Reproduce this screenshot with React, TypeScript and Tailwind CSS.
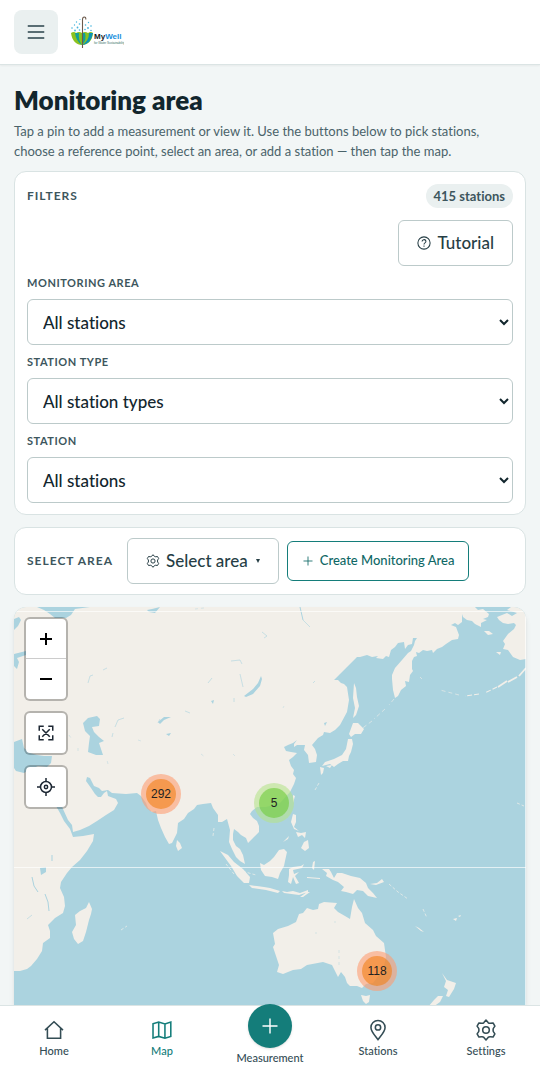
import React, { useState } from 'react';

interface IconProps {
    className?: string;
}

interface Option {
    value: string;
    label: string;
}

interface Cluster {
    count: number;
    size: 'small' | 'large';
    position: string;
}

const clusters: Cluster[] = [
    { count: 292, size: 'large', position: 'left-[127px] top-[167px]' },
    { count: 5, size: 'small', position: 'left-[240px] top-[176px]' },
    { count: 118, size: 'large', position: 'left-[343px] top-[344px]' },
];

const strokeProps = {
    viewBox: '0 0 24 24',
    fill: 'none',
    stroke: 'currentColor',
    strokeWidth: 1.7,
    'aria-hidden': true,
} as const;

function HomeIcon({ className }: IconProps) {
    return (
        <svg {...strokeProps} className={className}>
            <path d="M2.2 12.2 12 3l9.800 9.200M4.800 10v11h14.400V10" />
        </svg>
    );
}

function MapIcon({ className }: IconProps) {
    return (
        <svg {...strokeProps} className={className}>
            <path d="M2.200 5.200 8.400 3.400 15.200 5.400 21.600 3.400V19L15.200 21 8.400 19 2.200 20.800ZM8.400 3.400V19M15.200 5.400V21" />
        </svg>
    );
}

function PinIcon({ className }: IconProps) {
    return (
        <svg {...strokeProps} className={className}>
            <path d="M12 22.500C9 18.300 4.300 14 4.300 9.300a7.700 7.700 0 0 1 15.400 0c0 4.700-4.700 9-7.700 13.200Z" />
            <circle cx="12" cy="9.200" r="2.900" />
        </svg>
    );
}

function GearIcon({ className }: IconProps) {
    return (
        <svg {...strokeProps} className={className} strokeLinejoin="round">
            <path d="M12 1.200 14.300 3.900Q15.300 4.900 16.700 4.700L19.700 4.300 21.700 7.800 20 10.200Q19.400 12 20 13.800L21.700 16.200 19.700 19.700 16.700 19.300Q15.300 19.100 14.300 20.100L12 22.800 9.700 20.100Q8.700 19.100 7.300 19.300L4.300 19.700 2.300 16.200 4 13.800Q4.600 12 4 10.200L2.300 7.800 4.300 4.300 7.300 4.700Q8.700 4.900 9.700 3.900Z" />
            <circle cx="12" cy="12" r="3.600" />
        </svg>
    );
}

function PlusIcon({ className }: IconProps) {
    return (
        <svg {...strokeProps} className={className}>
            <path d="M12 3v18M3 12h18" />
        </svg>
    );
}

function MenuIcon({ className }: IconProps) {
    return (
        <svg {...strokeProps} strokeWidth={1.8} className={className}>
            <path d="M3 5.500h18M3 12h18M3 18.500h18" />
        </svg>
    );
}

function HelpIcon({ className }: IconProps) {
    return (
        <svg {...strokeProps} strokeWidth={1.8} className={className}>
            <circle cx="12" cy="12" r="10.500" />
            <path d="M8.700 9.300a3.300 3 0 1 1 5 2.500c-1.100.7-1.700 1.200-1.700 2.600M12 16.300v2" />
        </svg>
    );
}

function ExtentIcon({ className }: IconProps) {
    return (
        <svg {...strokeProps} strokeWidth={2} className={className}>
            <path d="M3 9V3h6M15 3h6v6M21 15v6h-6M9 21H3v-6M7 7l10 10M17 7L7 17" />
        </svg>
    );
}

function LocateIcon({ className }: IconProps) {
    return (
        <svg {...strokeProps} strokeWidth={2} className={className}>
            <circle cx="12" cy="12" r="7.300" />
            <circle cx="12" cy="12" r="2.200" />
            <path d="M12 0v5M12 19v5M0 12h5M19 12h5" />
        </svg>
    );
}

/** Umbrella catching rain, with the wordmark */
function Logo() {
    return (
        <svg viewBox="0 0 54 34" className="h-[34px] w-[54px]" role="img" aria-label="MyWell">
            <path d="M1 18q3-2 5 0 3-2 6 0 3-2 6 0 3-2 5 0C22.500 26 17.500 30 12 30S2 26 1 18Z" fill="#8cc21f" />
            <path d="M5 18q1 8 7 12 -4-5-3-12ZM12 18v12q5-5 3-12Z" fill="#12a099" />
            <path d="M19 18q0 8-7 12 9-1 11-12Z" fill="#0b95b5" />
            <path d="M12.500 33V4.500Q12.600 2 14.300 2t1.500 2.500" fill="none" stroke="#6c5a4c" strokeWidth="1.100" />
            <g fill="#45b4dc">
                <circle cx="2" cy="13" r=".8" />
                <circle cx="5" cy="15.500" r=".9" />
                <circle cx="4.500" cy="10" r=".7" />
                <circle cx="7.500" cy="12.500" r=".9" />
                <circle cx="9.500" cy="15" r=".8" />
                <circle cx="6.500" cy="7" r=".7" />
                <circle cx="9.500" cy="9" r=".8" />
                <circle cx="15.500" cy="10" r=".8" />
                <circle cx="15" cy="14.500" r=".8" />
                <circle cx="18" cy="13" r=".9" />
                <circle cx="18.500" cy="7.500" r=".7" />
                <circle cx="21" cy="11" r=".8" />
                <circle cx="21" cy="15.500" r=".8" />
                <circle cx="10" cy="4.500" r=".6" />
            </g>
            <text x="24" y="24" className="font-['Liberation_Sans',sans-serif] text-[8px] font-bold" fill="#14181c">
                My<tspan fill="#1a8fdc">Well</tspan>
            </text>
            <text x="24" y="29" className="font-['Liberation_Sans',sans-serif] text-[3px]" fill="#35705f">
                for Water Sustainability
            </text>
        </svg>
    );
}

function BaseMap() {
    return (
        <svg
            viewBox="14 607 512 398"
            preserveAspectRatio="xMinYMin slice"
            className="absolute inset-0 h-full w-full"
            aria-hidden="true"
        >
            <rect x="14" y="607" width="512" height="398" fill="#abd3df" />
            <g fill="#f2efe9" strokeLinejoin="round">
                {/* Eurasia and Africa */}
                <path d="M14 607H475L478 610 483 609 489 614 488 617 483 619 487 620 481 623 481 627 475 624 472 621 467 620 463 617 462 614 462 622 458 625 455 623 451 625 456 627 459 635 458 639 452 640 446 644 442 647 437 649 433 653 432 650 427 651 423 650 419 653 416 652 417 656 414 657 412 661 412 669 413 671 410 675 409 682 405 681 406 686 401 690 398 696 395 698 393 690 392 679 392 675 395 668 402 660 408 653 411 651 414 645 415 641 417 638 413 638 412 644 408 645 405 649 404 642 398 643 395 647 391 650 389 657 386 656 383 659 376 658 378 656 372 657 367 655 360 657H357L347 667 340 674 334 680 338 680 341 683 344 684 347 687 349 700 347 712 340 725 335 730 330 733 324 732 323 735 318 738 312 745 315 749 317 755 316 762 309 763 308 755 304 750 305 745 297 745 294 747 294 744 297 740 293 743 288 745 284 747 286 751 291 752 297 753 293 757 289 760 291 766 294 770 293 774 296 778 294 784 290 792 280 803 266 807 257 807 252 811 250 814 253 818 257 821 259 826 259 832 254 837 248 843 246 838 241 835 238 832 234 829 233 834 233 840 236 846 240 849 243 855 245 864 240 861 236 857 232 849 229 842 230 830 227 819 222 822 218 822 218 815 213 808 211 803 203 804 197 805 194 809 188 813 184 819 178 823 177 833 172 843 169 844 165 837 161 828 158 820 156 811 152 812 148 808 146 803 141 796 137 793 126 794 112 793 108 790 102 791 99 788 94 786 90 778 87 777 86 781 91 788 95 794 98 797 101 797 104 793 107 791 108 796 116 799 118 803 114 810 106 815 97 821 89 826 80 830 73 832 72 825 68 820 63 809 60 801 56 795 52 795 56 806 60 813 64 821 70 829 73 837 83 836 94 834 93 841 87 851 80 860 72 867 67 873 61 882 60 888 64 897 65 906 63 913 55 918 48 925 50 931 50 938 43 943 42 951 37 959 31 966 27 969 20 971 14 971Z" />
                {/* Japan, Sakhalin, Taiwan */}
                <path d="M354 683 356 688 357 697 359 706 356 715 353 718 355 708 353 698ZM353 723 358 723 364 729 361 734 355 734 351 737 349 734ZM348 739 352 739 353 744 351 752 349 756 348 761 343 761 338 764 334 767 330 764 322 766 325 762 334 759 338 757 342 755 346 749ZM320 767 324 768 323 773 321 775ZM326 766 332 765 330 768ZM293 795 295 796 293 803Z" />
                {/* South-east Asia */}
                <path d="M177 840 180 843 182 848 178 851 176 846ZM220 851 228 855 234 862 243 869 250 877 249 883 244 883 237 876 231 866ZM249 885 257 886 264 887 270 888 280 891 278 893 266 890 252 888ZM282 891 287 892 293 891 300 893 308 890 308 892 299 895 284 893ZM300 897 307 892 310 892 303 897ZM260 863 264 865 270 861 274 857 279 850 284 849 287 852 285 861 284 866 280 873 278 879 272 877 265 876 261 870ZM289 869 293 867 301 866 304 864 302 868 293 870 294 874 299 872 295 876 299 883 296 884 293 877 291 884 288 882 289 875ZM293 814 296 815 296 822 294 827 299 831 294 829 291 822ZM304 842 308 840 309 848 305 851 301 848ZM283 842 289 836 288 839ZM296 832 301 833 306 832 305 838 302 835 298 837ZM313 862 315 861 314 870 312 868ZM307 877 320 878 320 879 307 878Z" />
                {/* New Guinea and Australia */}
                <path d="M322 869 329 869 331 872 334 878 337 873 342 873 351 876 360 878 366 883 368 888 373 893 377 898 368 896 363 891 357 890 353 894 346 892 341 891 344 887 338 882 333 880 326 876 327 873ZM370 884 377 883 382 879 384 882 376 885ZM273 933 278 929 288 926 296 922 299 914 303 913 307 908 313 910 318 909 319 904 324 902 337 903 334 908 338 912 345 916 350 919 352 907 354 899 358 908 362 913 365 923 373 930 376 936 384 943 386 957 384 966 379 975 373 983 366 984 362 988 357 986 350 986 347 983 345 977 341 972 338 977 336 973 332 965 323 962 307 965 301 969 293 970 283 974 277 972 279 965 276 956 273 947 275 944ZM361 995 366 996 370 995 369 1002 366 1004 363 1001ZM442 973 447 980 456 983 454 989 449 997 446 996 448 990 444 987 446 981ZM443 996 440 1002 433 1007 428 1007 434 1000 438 996ZM415 926 419 928 424 932 421 931ZM453 919 457 918 456 921ZM458 916 461 915 460 917Z" />
                {/* Madagascar */}
                <path d="M89 902 92 909 91 914 89 920 86 932 83 941 78 944 74 939 72 932 76 925 75 915 80 911 86 908Z" />
                {/* Alaska */}
                <path d="M526 607H511L507 610 517 613 512 616 507 613 502 615 497 617 499 620 503 623 508 624 514 623 516 625 514 629 508 634 503 641 505 644 503 649 508 650 513 657 520 660 526 659ZM484 631 489 631 493 634 488 635ZM496 652 501 652 500 655Z" />
            </g>
            <g fill="none" stroke="#f2efe9">
                <path d="M526 668 519 676M517 677 508 682M507 681 498 687" strokeWidth="1.800" />
                <path d="M497 687 485 693M479 694 465 696" strokeWidth="1.100" strokeDasharray="5 2" />
                <path
                    d="M459 695 440 690M422 679 420 677M394 699 389 705M385 709 374 719M372 721 360 730"
                    strokeDasharray="4 3"
                    strokeOpacity=".6"
                />
                <path
                    d="M389 884 398 892 408 899M423 909 427 918M226 864 234 874M238 870 256 875M121 930 127 926M214 828 213 836M315 790 319 783M517 803 524 806"
                    strokeDasharray="3 2"
                    strokeOpacity=".7"
                />
            </g>
            {/* inland seas and lakes */}
            <g fill="#abd3df">
                <path d="M37 607 44 610 50 614 55 618 66 618 71 615 75 609 90 607 96 606 84 607ZM14 619 19 617 21 620 18 626 14 630ZM14 654 26 651 29 654 17 658 19 662 17 669 14 666ZM147 610 152 609 160 607 155 613 149 612Z" />
                <path d="M83 723 88 718 97 716 100 719 99 726 92 727 94 732 99 737 104 741 99 743 103 755 96 755 88 752 89 743 90 736 85 731ZM14 742 22 739 24 748 30 753 37 755 44 756 52 756 51 763 47 767 38 766 29 770 24 773 16 771 14 768Z" />
                <path d="M27 730Q37 721 48 727T65 734Q57 744 42 740T27 730Z" />
                <path d="M261 676 262 679 260 686 253 694 246 697 244 696 253 689 258 683ZM40 868 46 867 46 872 41 875ZM158 722 164 717 171 717 164 720 160 724ZM166 734 171 733 169 736ZM475 607H506L498 610 485 609ZM324 723 327 722 325 726ZM211 701 214 700 213 704Z" />
            </g>
            <g fill="none" stroke="#abd3df">
                <path d="M32 877 34 886 38 892M45 894 48 902 49 911M52 855V861M300 607 303 620" />
                <path
                    d="M303 620 310 627M88 683 90 676 93 675M103 670 107 668M115 727 118 720 124 718M112 737 113 733M27 919 32 915M262 632 267 636 264 638M231 661 240 660 242 664M240 674 243 687M208 683 212 678M234 698V702M185 711 190 713M313 683 315 681M158 723 160 719"
                    strokeOpacity=".6"
                />
                <path
                    d="M138 740 141 741M69 735 71 738M78 748V753M108 764 107 760M339 950V965M315 933H317M334 922H336M201 754 205 757M233 754 235 756M283 708 284 706M195 609 204 608"
                    strokeWidth=".8"
                    strokeOpacity=".5"
                    strokeDasharray="3 3"
                />
            </g>
            {/* tile seams */}
            <path d="M14 611.500H526M14 867.500H526M525.500 607V1005" stroke="#fff" strokeOpacity=".65" fill="none" />
        </svg>
    );
}

function FilterSelect({ id, label, options }: { id: string; label: string; options: Option[] }) {
    const [value, setValue] = useState(options[0].value);
    return (
        <div className="flex flex-col gap-[7px]">
            <label htmlFor={id} className="text-[11px] leading-[18px] font-bold tracking-wider text-[#3d565d] uppercase">
                {label}
            </label>
            <select
                id={id}
                value={value}
                onChange={(e) => setValue(e.target.value)}
                className="h-[46px] w-full rounded-md border border-[#bccaca] bg-white pl-[11px] text-[17px] font-medium text-[#12262d]"
            >
                {options.map((o) => (
                    <option key={o.value} value={o.value}>
                        {o.label}
                    </option>
                ))}
            </select>
        </div>
    );
}

function ClusterMarker({ count, size, position }: Cluster) {
    return (
        <button
            className={`absolute size-10 rounded-full p-[5px] ${position} ${size === 'large' ? 'bg-[#fd9c73]/60' : 'bg-[#b5e28c]/60'}`}
        >
            <span
                className={`flex size-[30px] items-center justify-center rounded-full font-['Liberation_Sans',sans-serif] text-xs text-[#222] ${size === 'large' ? 'bg-[#f18017]/60' : 'bg-[#6ecc39]/60'}`}
            >
                {count}
            </span>
        </button>
    );
}

function MapControls() {
    const box = 'w-11 overflow-hidden rounded-md border-2 border-black/25 bg-white bg-clip-padding text-[#1d2733]';
    return (
        <div className="absolute top-2.5 left-2.5 flex flex-col gap-2.5">
            <div className={box}>
                <button aria-label="Zoom in" className="flex h-10 w-full items-center justify-center border-b border-[#ccc] text-black">
                    <svg viewBox="0 0 12 12" className="size-3" stroke="currentColor" strokeWidth="2">
                        <path d="M6 0v12M0 6h12" />
                    </svg>
                </button>
                <button aria-label="Zoom out" className="flex h-10 w-full items-center justify-center text-black">
                    <svg viewBox="0 0 12 12" className="size-3" stroke="currentColor" strokeWidth="2">
                        <path d="M0 6h12" />
                    </svg>
                </button>
            </div>
            <div className={box}>
                <button aria-label="Fit all stations" className="flex h-10 w-full items-center justify-center">
                    <ExtentIcon className="size-[18px]" />
                </button>
            </div>
            <div className={box}>
                <button aria-label="Show my location" className="flex h-10 w-full items-center justify-center">
                    <LocateIcon className="size-[18px]" />
                </button>
            </div>
        </div>
    );
}

function NavLink({ label, active, children }: { label: string; active?: boolean; children: React.ReactNode }) {
    return (
        <a
            href="#"
            aria-current={active ? 'page' : undefined}
            className={`flex flex-col items-center gap-0.5 pt-[13px] text-[11px] leading-4 font-medium ${active ? 'text-[#147d7a]' : 'text-[#344d55]'}`}
        >
            {children}
            {label}
        </a>
    );
}

function App() {
    return (
        <div className="flex min-h-screen flex-col bg-[#f2f6f6] font-[Lato,'Noto_Sans',sans-serif] text-[#12262d] [font-variant-ligatures:none]">
            <header className="flex h-[65px] items-center gap-3 border-b border-[#dbe4e4] bg-white px-3.5 shadow-xs">
                <button aria-label="Open menu" className="flex size-11 items-center justify-center rounded-lg bg-[#eaf0f0] text-[#2a4249]">
                    <MenuIcon className="size-[22px]" />
                </button>
                <a href="#">
                    <Logo />
                </a>
            </header>

            <main className="flex flex-1 flex-col px-3.5 pt-[19px]">
                <h1 className="text-[26px] leading-8 font-extrabold">Monitoring area</h1>
                <p className="mt-[5px] pr-6 text-[13px] leading-5 text-[#4a636a]">
                    Tap a pin to add a measurement or view it. Use the buttons below to pick stations, choose a reference point,
                    select an area, or add a station — then tap the map.
                </p>

                {/* Filters */}
                <section className="mt-2.5 flex flex-col gap-2 rounded-xl border border-[#d9e3e3] bg-white p-3 pb-[11px]">
                    <div className="flex items-center justify-between">
                        <h2 className="text-xs font-bold tracking-[1px] text-[#3d565d] uppercase">Filters</h2>
                        <span className="rounded-full bg-[#eaf0f0] px-2 text-[13px] leading-6 font-bold text-[#3d565d]">415 stations</span>
                    </div>
                    <div className="mt-1 flex justify-end">
                        <button className="flex h-[46px] items-center gap-1.5 rounded-md border border-[#bccaca] px-[18px] text-[17px] font-medium text-[#263e45]">
                            <HelpIcon className="size-3.5" />
                            Tutorial
                        </button>
                    </div>
                    <FilterSelect id="area" label="Monitoring area" options={[{ value: 'all', label: 'All stations' }]} />
                    <FilterSelect id="type" label="Station type" options={[{ value: 'all', label: 'All station types' }]} />
                    <FilterSelect id="station" label="Station" options={[{ value: 'all', label: 'All stations' }]} />
                </section>

                {/* Area selection */}
                <section className="mt-3 flex flex-wrap items-center gap-2 rounded-xl border border-[#d9e3e3] bg-white px-3 py-2.5">
                    <h2 className="mr-1.5 text-xs font-bold tracking-[1px] text-[#3d565d] uppercase">Select area</h2>
                    <button className="flex h-[46px] items-center gap-1.5 rounded-md border border-[#bccaca] px-[18px] text-[17px] font-medium text-[#263e45]">
                        <GearIcon className="size-3.5" />
                        Select area
                        <svg viewBox="0 0 4 4" className="ml-0.5 size-1" fill="currentColor" aria-hidden="true">
                            <path d="M0 0h4L2 4Z" />
                        </svg>
                    </button>
                    <button className="flex h-10 items-center gap-1.5 rounded-md border border-[#147d7a] px-3.5 text-[13px] font-medium text-[#0f6866]">
                        <PlusIcon className="size-3" />
                        Create Monitoring Area
                    </button>
                </section>

                {/* Map */}
                <section aria-label="Station map" className="relative mt-3 min-h-[398px] flex-1 overflow-hidden rounded-t-xl shadow-md">
                    <BaseMap />
                    {clusters.map((c) => (
                        <ClusterMarker key={c.count} {...c} />
                    ))}
                    <MapControls />
                </section>
            </main>

            <nav className="sticky bottom-0 grid h-[75px] grid-cols-5 border-t border-[#dbe4e4] bg-white">
                <NavLink label="Home">
                    <HomeIcon className="size-[22px]" />
                </NavLink>
                <NavLink label="Map" active>
                    <MapIcon className="size-[22px]" />
                </NavLink>
                <a href="#" className="-mt-0.5 flex flex-col items-center gap-0.5 text-[11px] leading-4 font-medium text-[#344d55]">
                    <span className="flex size-11 items-center justify-center rounded-full bg-[#147d7a] text-white shadow-sm">
                        <PlusIcon className="size-5" />
                    </span>
                    Measurement
                </a>
                <NavLink label="Stations">
                    <PinIcon className="size-[22px]" />
                </NavLink>
                <NavLink label="Settings">
                    <GearIcon className="size-[22px]" />
                </NavLink>
            </nav>
        </div>
    );
}

export default App;
